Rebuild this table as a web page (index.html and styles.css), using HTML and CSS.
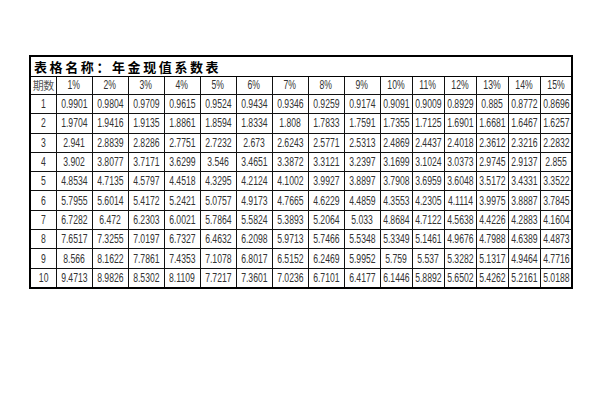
FILE: index.html
```html
<!DOCTYPE html>
<html lang="zh-CN">
<head>
<meta charset="utf-8">
<title>年金现值系数表</title>
<link rel="stylesheet" href="styles.css">
</head>
<body>
<div class="sheet">
<table class="pva">
<colgroup>
<col class="c-n">
<col class="c-w"><col class="c-w"><col class="c-w"><col class="c-w"><col class="c-w"><col class="c-w"><col class="c-w"><col class="c-w"><col class="c-w">
<col class="c-s"><col class="c-s"><col class="c-s"><col class="c-s"><col class="c-s"><col class="c-s">
</colgroup>
<tr class="title-row"><td colspan="16" class="title">表格名称：年金现值系数表</td></tr>
<tr class="head-row"><td class="n">期数</td><td><span>1%</span></td><td><span>2%</span></td><td><span>3%</span></td><td><span>4%</span></td><td><span>5%</span></td><td><span>6%</span></td><td><span>7%</span></td><td><span>8%</span></td><td><span>9%</span></td><td><span>10%</span></td><td><span>11%</span></td><td><span>12%</span></td><td><span>13%</span></td><td><span>14%</span></td><td><span>15%</span></td></tr>
<tr><td class="n"><span>1</span></td><td><span>0.9901</span></td><td><span>0.9804</span></td><td><span>0.9709</span></td><td><span>0.9615</span></td><td><span>0.9524</span></td><td><span>0.9434</span></td><td><span>0.9346</span></td><td><span>0.9259</span></td><td><span>0.9174</span></td><td><span>0.9091</span></td><td><span>0.9009</span></td><td><span>0.8929</span></td><td><span>0.885</span></td><td><span>0.8772</span></td><td><span>0.8696</span></td></tr>
<tr><td class="n"><span>2</span></td><td><span>1.9704</span></td><td><span>1.9416</span></td><td><span>1.9135</span></td><td><span>1.8861</span></td><td><span>1.8594</span></td><td><span>1.8334</span></td><td><span>1.808</span></td><td><span>1.7833</span></td><td><span>1.7591</span></td><td><span>1.7355</span></td><td><span>1.7125</span></td><td><span>1.6901</span></td><td><span>1.6681</span></td><td><span>1.6467</span></td><td><span>1.6257</span></td></tr>
<tr><td class="n"><span>3</span></td><td><span>2.941</span></td><td><span>2.8839</span></td><td><span>2.8286</span></td><td><span>2.7751</span></td><td><span>2.7232</span></td><td><span>2.673</span></td><td><span>2.6243</span></td><td><span>2.5771</span></td><td><span>2.5313</span></td><td><span>2.4869</span></td><td><span>2.4437</span></td><td><span>2.4018</span></td><td><span>2.3612</span></td><td><span>2.3216</span></td><td><span>2.2832</span></td></tr>
<tr><td class="n"><span>4</span></td><td><span>3.902</span></td><td><span>3.8077</span></td><td><span>3.7171</span></td><td><span>3.6299</span></td><td><span>3.546</span></td><td><span>3.4651</span></td><td><span>3.3872</span></td><td><span>3.3121</span></td><td><span>3.2397</span></td><td><span>3.1699</span></td><td><span>3.1024</span></td><td><span>3.0373</span></td><td><span>2.9745</span></td><td><span>2.9137</span></td><td><span>2.855</span></td></tr>
<tr><td class="n"><span>5</span></td><td><span>4.8534</span></td><td><span>4.7135</span></td><td><span>4.5797</span></td><td><span>4.4518</span></td><td><span>4.3295</span></td><td><span>4.2124</span></td><td><span>4.1002</span></td><td><span>3.9927</span></td><td><span>3.8897</span></td><td><span>3.7908</span></td><td><span>3.6959</span></td><td><span>3.6048</span></td><td><span>3.5172</span></td><td><span>3.4331</span></td><td><span>3.3522</span></td></tr>
<tr><td class="n"><span>6</span></td><td><span>5.7955</span></td><td><span>5.6014</span></td><td><span>5.4172</span></td><td><span>5.2421</span></td><td><span>5.0757</span></td><td><span>4.9173</span></td><td><span>4.7665</span></td><td><span>4.6229</span></td><td><span>4.4859</span></td><td><span>4.3553</span></td><td><span>4.2305</span></td><td><span>4.1114</span></td><td><span>3.9975</span></td><td><span>3.8887</span></td><td><span>3.7845</span></td></tr>
<tr><td class="n"><span>7</span></td><td><span>6.7282</span></td><td><span>6.472</span></td><td><span>6.2303</span></td><td><span>6.0021</span></td><td><span>5.7864</span></td><td><span>5.5824</span></td><td><span>5.3893</span></td><td><span>5.2064</span></td><td><span>5.033</span></td><td><span>4.8684</span></td><td><span>4.7122</span></td><td><span>4.5638</span></td><td><span>4.4226</span></td><td><span>4.2883</span></td><td><span>4.1604</span></td></tr>
<tr><td class="n"><span>8</span></td><td><span>7.6517</span></td><td><span>7.3255</span></td><td><span>7.0197</span></td><td><span>6.7327</span></td><td><span>6.4632</span></td><td><span>6.2098</span></td><td><span>5.9713</span></td><td><span>5.7466</span></td><td><span>5.5348</span></td><td><span>5.3349</span></td><td><span>5.1461</span></td><td><span>4.9676</span></td><td><span>4.7988</span></td><td><span>4.6389</span></td><td><span>4.4873</span></td></tr>
<tr><td class="n"><span>9</span></td><td><span>8.566</span></td><td><span>8.1622</span></td><td><span>7.7861</span></td><td><span>7.4353</span></td><td><span>7.1078</span></td><td><span>6.8017</span></td><td><span>6.5152</span></td><td><span>6.2469</span></td><td><span>5.9952</span></td><td><span>5.759</span></td><td><span>5.537</span></td><td><span>5.3282</span></td><td><span>5.1317</span></td><td><span>4.9464</span></td><td><span>4.7716</span></td></tr>
<tr><td class="n"><span>10</span></td><td><span>9.4713</span></td><td><span>8.9826</span></td><td><span>8.5302</span></td><td><span>8.1109</span></td><td><span>7.7217</span></td><td><span>7.3601</span></td><td><span>7.0236</span></td><td><span>6.7101</span></td><td><span>6.4177</span></td><td><span>6.1446</span></td><td><span>5.8892</span></td><td><span>5.6502</span></td><td><span>5.4262</span></td><td><span>5.2161</span></td><td><span>5.0188</span></td></tr>
</table>
</div>
</body>
</html>
```
FILE: styles.css
```css
html, body {
  margin: 0;
  padding: 0;
  background: #ffffff;
}
.sheet {
  padding: 55px 0 0 29px;
}
.pva {
  border-collapse: collapse;
  table-layout: fixed;
  width: 543px;
  border: 2px solid #000;
  font-family: "Liberation Sans", Arial, sans-serif;
  font-size: 12px;
  color: #333;
}
.c-n { width: 26px; }
.c-w { width: 36px; }
.c-s { width: 32px; }
.pva td {
  border: 1px solid #111;
  padding: 0;
  text-align: center;
  white-space: nowrap;
  overflow: hidden;
  height: 18.3px;
  line-height: 18px;
}
.pva td span {
  display: inline-block;
  transform: scaleX(0.72);
  transform-origin: center;
  margin: 0 -6px;
}
.pva .title-row td {
  height: 19px;
  line-height: 19px;
  border-bottom: 1px solid #000;
}
.pva .title {
  text-align: left;
  padding-left: 3px;
  font-family: "Noto Sans CJK SC", sans-serif;
  font-weight: 700;
  font-size: 13px;
  letter-spacing: 2.6px;
  color: #000;
}
.pva .head-row td {
  height: 17px;
  line-height: 17px;
}
.pva td.n {
  border-left: 2px solid #000;
}
.pva .head-row td.n {
  font-family: "Noto Sans CJK SC", sans-serif;
  font-size: 11px;
  letter-spacing: -0.5px;
  color: #555;
}
```
